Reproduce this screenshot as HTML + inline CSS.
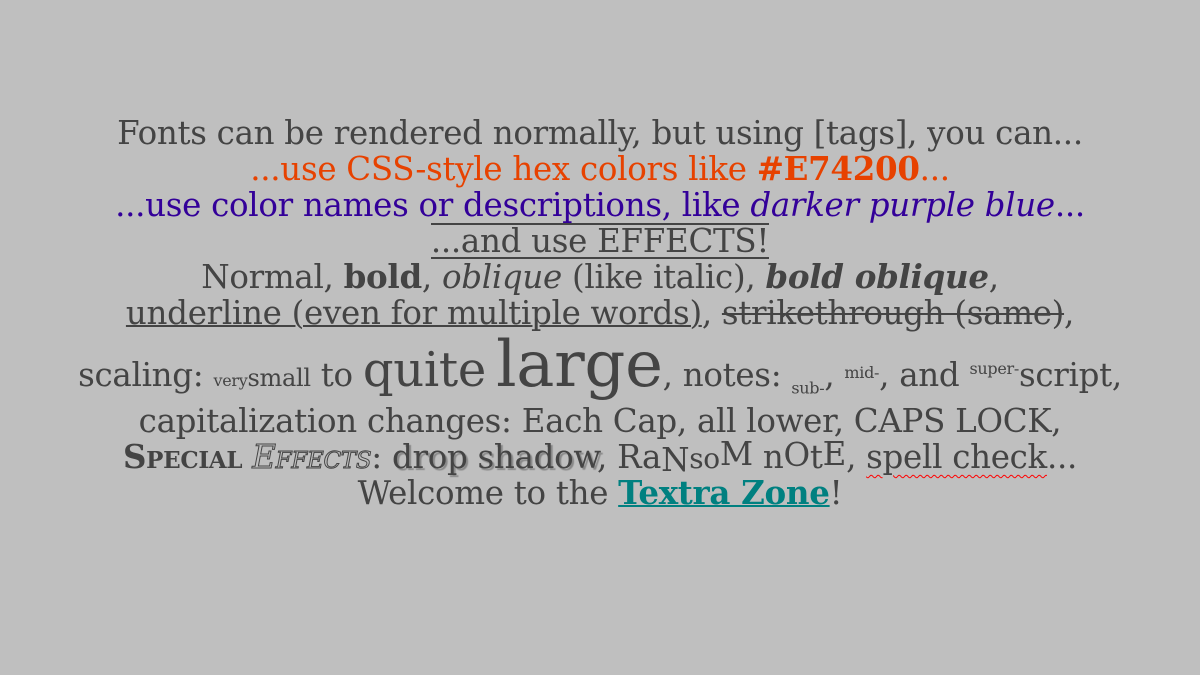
<!DOCTYPE html>
<html><head><meta charset="utf-8"><style>
body{margin:0;width:1200px;height:675px;background:#bfbfbf;overflow:hidden;font-family:"DejaVu Serif","Liberation Serif",serif;color:#444;}
.l{position:absolute;left:0;width:1200px;text-align:center;font-size:32.5px;line-height:36px;white-space:nowrap;letter-spacing:-0.3px}
.o{color:#e74200}.p{color:#330099}
.u{text-decoration:underline;text-decoration-thickness:2px}
.s{text-decoration:line-through;text-decoration-thickness:2px}
.sc{font-variant:small-caps;font-weight:bold}
.ef{font-variant:small-caps;font-style:italic;color:#bfbfbf;-webkit-text-stroke:1px #444}
.sh{text-shadow:2px 2px 1px #888}
.sp{text-decoration:underline wavy red 1px;text-underline-offset:6px}
.t{color:#008080;font-weight:bold;text-decoration:underline;text-decoration-thickness:2px}
</style></head><body>
<div class="l" style="top:115px">Fonts can be rendered normally, but using [tags], you can...</div>
<div class="l o" style="top:151px">...use CSS-style hex colors like <b>#E74200</b>...</div>
<div class="l p" style="top:187px">...use color names or descriptions, like <i>darker purple blue</i>...</div>
<div class="l" style="top:223px"><span style="border-top:2px solid #444;border-bottom:2px solid #444;line-height:32px;display:inline-block">...and use EFFECTS!</span></div>
<div class="l" style="top:259px">Normal, <b>bold</b>, <i>oblique</i> (like italic), <b><i>bold oblique</i></b>,</div>
<div class="l" style="top:295px"><span class="u">underline (even for multiple words)</span>, <span class="s">strikethrough (same)</span>,</div>
<div class="l" style="top:340px;line-height:50px">scaling: <span style="font-size:16px">very</span><span style="font-size:24px">small</span> to <span style="font-size:48px">quite</span> <span style="font-size:64px">large</span>, notes: <sub style="font-size:16px">sub-</sub>, <span style="font-size:16px;vertical-align:8px">mid-</span>, and <sup style="font-size:16px">super-</sup>script,</div>
<div class="l" style="top:403px">capitalization changes: Each Cap, all lower, CAPS LOCK,</div>
<div class="l" style="top:439px"><span class="sc">Special</span> <span class="ef">Effects</span>: <span class="sh">drop shadow</span>, Ra<span style="position:relative;top:3px">N</span><span style="font-size:28px">so</span><span style="position:relative;top:-3px">M</span> n<span style="position:relative;top:-2px">O</span>t<span style="position:relative;top:-3px">E</span>, <span class="sp">spell check</span>...</div>
<div class="l" style="top:475px">Welcome to the <span class="t">Textra Zone</span>!</div>
</body></html>
